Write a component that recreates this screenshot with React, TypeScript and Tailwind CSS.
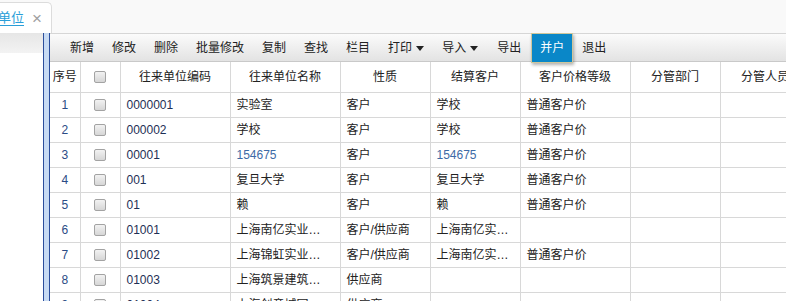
import React from "react";

type Row = {
  no: number;
  code: string;
  name: string;
  kind: string;
  settle: string;
  level: string;
};

const rows: Row[] = [
  { no: 1, code: "0000001", name: "实验室", kind: "客户", settle: "学校", level: "普通客户价" },
  { no: 2, code: "000002", name: "学校", kind: "客户", settle: "学校", level: "普通客户价" },
  { no: 3, code: "00001", name: "154675", kind: "客户", settle: "154675", level: "普通客户价" },
  { no: 4, code: "001", name: "复旦大学", kind: "客户", settle: "复旦大学", level: "普通客户价" },
  { no: 5, code: "01", name: "赖", kind: "客户", settle: "赖", level: "普通客户价" },
  { no: 6, code: "01001", name: "上海南亿实业…", kind: "客户/供应商", settle: "上海南亿实…", level: "" },
  { no: 7, code: "01002", name: "上海锦虹实业…", kind: "客户/供应商", settle: "上海南亿实…", level: "普通客户价" },
  { no: 8, code: "01003", name: "上海筑景建筑…", kind: "供应商", settle: "", level: "" },
  { no: 9, code: "01004", name: "上海创意城园…", kind: "供应商", settle: "", level: "" },
];

const headers = ["往来单位编码", "往来单位名称", "性质", "结算客户", "客户价格等级", "分管部门", "分管人员"];
const widths = [110, 110, 90, 90, 110, 90, 90];

const tools = ["新增", "修改", "删除", "批量修改", "复制", "查找", "栏目"];

function Caret() {
  return (
    <svg width="8" height="5" viewBox="0 0 8 5" className="ml-[4px] mt-[1px]">
      <path d="M0 0 L8 0 L4 5 Z" fill="#222" />
    </svg>
  );
}

function Check() {
  return (
    <div className="mx-auto w-[12px] h-[12px] rounded-[2px] border border-[#a3a3a3] bg-gradient-to-b from-[#f2f2f2] to-[#d6d6d6]" />
  );
}

function isNumeric(s: string) {
  return /^\d+$/.test(s);
}

export default function App() {
  return (
    <div
      className="w-[786px] h-[301px] overflow-hidden bg-white text-[12px] text-[#222]"
      style={{ fontFamily: '"Liberation Sans", "Noto Sans CJK SC", sans-serif' }}
    >
      {/* tab strip */}
      <div className="h-[33px] bg-[#f9f9f9] flex items-end">
        <div className="w-[52px] h-[31px] bg-white border-t border-r border-[#dcdcdc] rounded-tr-[5px] flex items-center">
          <span className="text-[13px] text-[#2a9ed8] underline underline-offset-[3px] -ml-[2px]">单位</span>
          <span className="ml-[8px] text-[17px] text-[#a0a0a0] leading-none">×</span>
        </div>
      </div>

      <div className="flex h-[268px]">
        {/* left panel */}
        <div className="w-[43px] shrink-0">
          <div className="h-[20px] bg-gradient-to-b from-[#e6e6e6] to-[#f3f3f3]" />
        </div>
        {/* splitter */}
        <div className="w-[7px] shrink-0 border-l border-r border-[#2c4e9c] bg-[#c8dbf3]" />

        {/* right panel */}
        <div className="flex-1 overflow-hidden">
          <div className="h-[29px] border-t border-b border-t-[#d6d6d6] border-b-[#c9c9c9] bg-gradient-to-b from-[#fbfbfb] to-[#e3e3e3] flex items-stretch pl-[11px]">
            {tools.map((t) => (
              <div key={t} className="px-[9px] flex items-center">
                {t}
              </div>
            ))}
            <div className="px-[9px] flex items-center">
              打印
              <Caret />
            </div>
            <div className="pl-[9px] pr-[9px] flex items-center">
              导入
              <Caret />
            </div>
            <div className="px-[10px] flex items-center">导出</div>
            <div className="px-[8px] -mt-px h-[30px] flex items-center bg-[#0a87c8] text-white border border-[#cfc79c] shadow-[1px_2px_3px_rgba(0,0,0,0.3)] relative">
              并户
            </div>
            <div className="px-[9px] flex items-center">退出</div>
          </div>

          <table className="border-collapse table-fixed w-[760px]">
            <colgroup>
              <col className="w-[30px]" />
              <col className="w-[40px]" />
              {widths.map((w, i) => (
                <col key={i} style={{ width: w }} />
              ))}
            </colgroup>
            <thead>
              <tr className="h-[30px]">
                <th className="font-normal border-r border-b border-[#d8d8d8] text-center">序号</th>
                <th className="font-normal border-r border-b border-[#d8d8d8]">
                  <Check />
                </th>
                {headers.map((h) => (
                  <th key={h} className="font-normal border-r border-b border-[#d8d8d8] text-center whitespace-nowrap">
                    {h}
                  </th>
                ))}
              </tr>
            </thead>
            <tbody>
              {rows.map((r) => (
                <tr key={r.no} className="h-[25px]">
                  <td className="border-r border-b border-[#d8d8d8] text-center text-[#2b4b85]">{r.no}</td>
                  <td className="border-r border-b border-[#d8d8d8]">
                    <Check />
                  </td>
                  <td className="border-r border-b border-[#d8d8d8] px-[6px] text-[#1e2f55]">{r.code}</td>
                  <td className={`border-r border-b border-[#d8d8d8] px-[6px] whitespace-nowrap ${isNumeric(r.name) ? "text-[#3d6aa6]" : ""}`}>
                    {r.name}
                  </td>
                  <td className="border-r border-b border-[#d8d8d8] px-[6px] whitespace-nowrap">{r.kind}</td>
                  <td className={`border-r border-b border-[#d8d8d8] px-[6px] whitespace-nowrap ${isNumeric(r.settle) ? "text-[#3d6aa6]" : ""}`}>
                    {r.settle}
                  </td>
                  <td className="border-r border-b border-[#d8d8d8] px-[6px] whitespace-nowrap">{r.level}</td>
                  <td className="border-r border-b border-[#d8d8d8]" />
                  <td className="border-r border-b border-[#d8d8d8]" />
                </tr>
              ))}
            </tbody>
          </table>
        </div>
      </div>
    </div>
  );
}
